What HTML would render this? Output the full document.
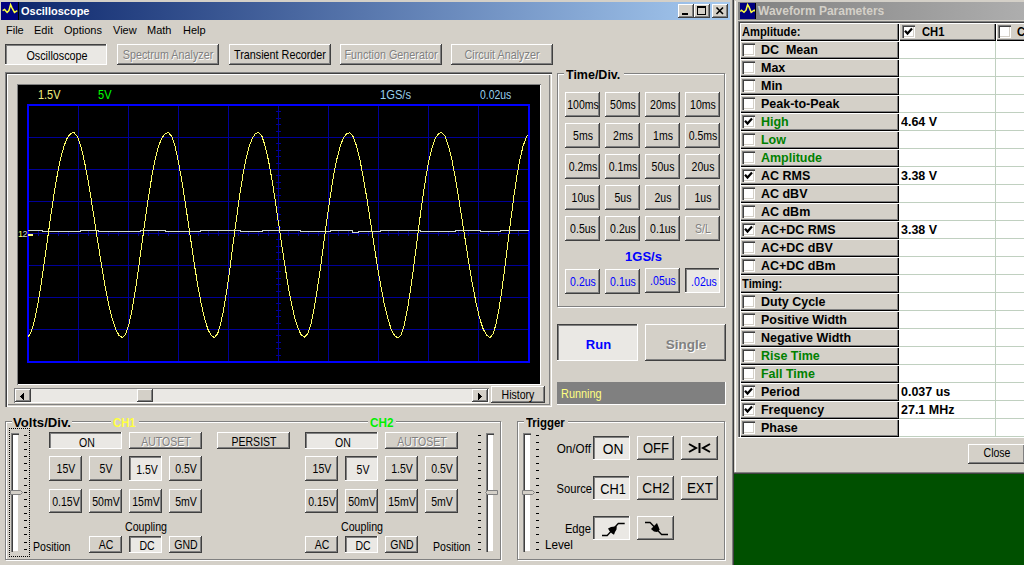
<!DOCTYPE html>
<html><head><meta charset="utf-8"><style>
html,body{margin:0;padding:0;}
body{width:1024px;height:565px;overflow:hidden;position:relative;background:#D4D0C8;font-family:"Liberation Sans",sans-serif;}
div{position:absolute;box-sizing:border-box;}
.t{white-space:nowrap;}
svg{position:absolute;}
</style></head><body>
<div style="left:734px;top:474px;width:290px;height:91px;background:#005000;"></div>
<div style="left:732px;top:0px;width:1px;height:565px;background:#808080;"></div>
<div style="left:733px;top:0px;width:1px;height:565px;background:#404040;"></div>
<div style="left:1px;top:2px;width:729px;height:18px;background:linear-gradient(to right,#0A246A,#A6CAF0);"></div>
<svg style="left:1px;top:2px" width="18" height="18" viewBox="0 0 18 18"><rect x="0" y="0" width="17" height="18" fill="#000080"/><path d="M1.6 8.6 L3.6 7.4 L6.1 10.4 L7.9 8.6 L9.6 2.6 L11 5.8 L13.5 10.4 L16.3 8.6" fill="none" stroke="#FFFF40" stroke-width="1.5"/><rect x="17" y="0" width="1" height="18" fill="#000"/></svg>
<div class="t" style="left:21px;top:4.19px;line-height:14px;font-size:11px;font-weight:bold;color:#fff;transform-origin:0 0;">Oscilloscope</div>
<div style="left:678px;top:4px;width:16px;height:14px;background:#D4D0C8;box-shadow:inset -1px -1px #404040,inset 1px 1px #fff,inset -2px -2px #808080;"></div>
<div style="left:694px;top:4px;width:16px;height:14px;background:#D4D0C8;box-shadow:inset -1px -1px #404040,inset 1px 1px #fff,inset -2px -2px #808080;"></div>
<div style="left:712px;top:4px;width:16px;height:14px;background:#D4D0C8;box-shadow:inset -1px -1px #404040,inset 1px 1px #fff,inset -2px -2px #808080;"></div>
<div style="left:682px;top:13px;width:6px;height:2px;background:#000;"></div>
<div style="left:697px;top:6px;width:9px;height:9px;box-sizing:border-box;border:1px solid #000;border-top-width:2px;"></div>
<svg style="left:712px;top:4px" width="16" height="14"><path d="M4.5 3.5 L11 10 M11 3.5 L4.5 10" stroke="#000" stroke-width="1.6"/></svg>
<div class="t" style="left:6px;top:23.19px;line-height:14px;font-size:11px;font-weight:normal;color:#000;transform-origin:0 0;">File</div>
<div class="t" style="left:34px;top:23.19px;line-height:14px;font-size:11px;font-weight:normal;color:#000;transform-origin:0 0;">Edit</div>
<div class="t" style="left:64px;top:23.19px;line-height:14px;font-size:11px;font-weight:normal;color:#000;transform-origin:0 0;">Options</div>
<div class="t" style="left:113px;top:23.19px;line-height:14px;font-size:11px;font-weight:normal;color:#000;transform-origin:0 0;">View</div>
<div class="t" style="left:147px;top:23.19px;line-height:14px;font-size:11px;font-weight:normal;color:#000;transform-origin:0 0;">Math</div>
<div class="t" style="left:183px;top:23.19px;line-height:14px;font-size:11px;font-weight:normal;color:#000;transform-origin:0 0;">Help</div>
<div style="left:5px;top:44px;width:102px;height:21px;background:#EAE8E4;box-shadow:inset -1px -1px #fff,inset 1px 1px #404040,inset 2px 2px #808080;"></div>
<div class="t" style="left:-143.0px;width:400px;text-align:center;top:47.00px;line-height:17px;font-size:13px;font-weight:normal;color:#000;transform-origin:50% 0;transform:scaleX(0.83);">Oscilloscope</div>
<div style="left:117px;top:44px;width:102px;height:21px;background:#D4D0C8;box-shadow:inset -1px -1px #404040,inset 1px 1px #fff,inset -2px -2px #808080;"></div>
<div class="t" style="left:-32.0px;width:400px;text-align:center;top:46.00px;line-height:17px;font-size:13px;font-weight:normal;color:#808080;transform-origin:50% 0;transform:scaleX(0.83);text-shadow:1px 1px #fff;">Spectrum Analyzer</div>
<div style="left:229px;top:44px;width:102px;height:21px;background:#D4D0C8;box-shadow:inset -1px -1px #404040,inset 1px 1px #fff,inset -2px -2px #808080;"></div>
<div class="t" style="left:80.0px;width:400px;text-align:center;top:46.00px;line-height:17px;font-size:13px;font-weight:normal;color:#000;transform-origin:50% 0;transform:scaleX(0.83);">Transient Recorder</div>
<div style="left:340px;top:44px;width:102px;height:21px;background:#D4D0C8;box-shadow:inset -1px -1px #404040,inset 1px 1px #fff,inset -2px -2px #808080;"></div>
<div class="t" style="left:191.0px;width:400px;text-align:center;top:46.00px;line-height:17px;font-size:13px;font-weight:normal;color:#808080;transform-origin:50% 0;transform:scaleX(0.83);text-shadow:1px 1px #fff;">Function Generator</div>
<div style="left:451px;top:44px;width:102px;height:21px;background:#D4D0C8;box-shadow:inset -1px -1px #404040,inset 1px 1px #fff,inset -2px -2px #808080;"></div>
<div class="t" style="left:302.0px;width:400px;text-align:center;top:46.00px;line-height:17px;font-size:13px;font-weight:normal;color:#808080;transform-origin:50% 0;transform:scaleX(0.83);text-shadow:1px 1px #fff;">Circuit Analyzer</div>
<div style="left:5px;top:72px;width:547px;height:335px;box-shadow:inset 1px 1px #808080,inset 2px 2px #404040,inset 3px 3px #fff,inset -1px -1px #fff,inset -2px -2px #D4D0C8,inset -3px -3px #808080;"></div>
<div style="left:17px;top:84px;width:524px;height:301px;background:#000;box-shadow:inset 1px 1px #808080,inset -1px -1px #fff;"></div>
<svg style="left:18px;top:85px" width="522" height="299" viewBox="18 85 522 299"><rect x="78" y="104" width="1" height="258" fill="#000098"/><rect x="128" y="104" width="1" height="258" fill="#000098"/><rect x="178" y="104" width="1" height="258" fill="#000098"/><rect x="228" y="104" width="1" height="258" fill="#000098"/><rect x="278" y="104" width="1" height="258" fill="#000098"/><rect x="328" y="104" width="1" height="258" fill="#000098"/><rect x="378" y="104" width="1" height="258" fill="#000098"/><rect x="428" y="104" width="1" height="258" fill="#000098"/><rect x="478" y="104" width="1" height="258" fill="#000098"/><rect x="27" y="137" width="502" height="1" fill="#000098"/><rect x="27" y="169" width="502" height="1" fill="#000098"/><rect x="27" y="201" width="502" height="1" fill="#000098"/><rect x="27" y="233" width="502" height="1" fill="#000098"/><rect x="27" y="265" width="502" height="1" fill="#000098"/><rect x="27" y="297" width="502" height="1" fill="#000098"/><rect x="27" y="329" width="502" height="1" fill="#000098"/><rect x="28" y="231" width="1" height="5" fill="#000098"/><rect x="38" y="231" width="1" height="5" fill="#000098"/><rect x="48" y="231" width="1" height="5" fill="#000098"/><rect x="58" y="231" width="1" height="5" fill="#000098"/><rect x="68" y="231" width="1" height="5" fill="#000098"/><rect x="78" y="231" width="1" height="5" fill="#000098"/><rect x="88" y="231" width="1" height="5" fill="#000098"/><rect x="98" y="231" width="1" height="5" fill="#000098"/><rect x="108" y="231" width="1" height="5" fill="#000098"/><rect x="118" y="231" width="1" height="5" fill="#000098"/><rect x="128" y="231" width="1" height="5" fill="#000098"/><rect x="138" y="231" width="1" height="5" fill="#000098"/><rect x="148" y="231" width="1" height="5" fill="#000098"/><rect x="158" y="231" width="1" height="5" fill="#000098"/><rect x="168" y="231" width="1" height="5" fill="#000098"/><rect x="178" y="231" width="1" height="5" fill="#000098"/><rect x="188" y="231" width="1" height="5" fill="#000098"/><rect x="198" y="231" width="1" height="5" fill="#000098"/><rect x="208" y="231" width="1" height="5" fill="#000098"/><rect x="218" y="231" width="1" height="5" fill="#000098"/><rect x="228" y="231" width="1" height="5" fill="#000098"/><rect x="238" y="231" width="1" height="5" fill="#000098"/><rect x="248" y="231" width="1" height="5" fill="#000098"/><rect x="258" y="231" width="1" height="5" fill="#000098"/><rect x="268" y="231" width="1" height="5" fill="#000098"/><rect x="278" y="231" width="1" height="5" fill="#000098"/><rect x="288" y="231" width="1" height="5" fill="#000098"/><rect x="298" y="231" width="1" height="5" fill="#000098"/><rect x="308" y="231" width="1" height="5" fill="#000098"/><rect x="318" y="231" width="1" height="5" fill="#000098"/><rect x="328" y="231" width="1" height="5" fill="#000098"/><rect x="338" y="231" width="1" height="5" fill="#000098"/><rect x="348" y="231" width="1" height="5" fill="#000098"/><rect x="358" y="231" width="1" height="5" fill="#000098"/><rect x="368" y="231" width="1" height="5" fill="#000098"/><rect x="378" y="231" width="1" height="5" fill="#000098"/><rect x="388" y="231" width="1" height="5" fill="#000098"/><rect x="398" y="231" width="1" height="5" fill="#000098"/><rect x="408" y="231" width="1" height="5" fill="#000098"/><rect x="418" y="231" width="1" height="5" fill="#000098"/><rect x="428" y="231" width="1" height="5" fill="#000098"/><rect x="438" y="231" width="1" height="5" fill="#000098"/><rect x="448" y="231" width="1" height="5" fill="#000098"/><rect x="458" y="231" width="1" height="5" fill="#000098"/><rect x="468" y="231" width="1" height="5" fill="#000098"/><rect x="478" y="231" width="1" height="5" fill="#000098"/><rect x="488" y="231" width="1" height="5" fill="#000098"/><rect x="498" y="231" width="1" height="5" fill="#000098"/><rect x="508" y="231" width="1" height="5" fill="#000098"/><rect x="518" y="231" width="1" height="5" fill="#000098"/><rect x="528" y="231" width="1" height="5" fill="#000098"/><rect x="276" y="105" width="5" height="1" fill="#000098"/><rect x="276" y="111" width="5" height="1" fill="#000098"/><rect x="276" y="118" width="5" height="1" fill="#000098"/><rect x="276" y="124" width="5" height="1" fill="#000098"/><rect x="276" y="131" width="5" height="1" fill="#000098"/><rect x="276" y="137" width="5" height="1" fill="#000098"/><rect x="276" y="143" width="5" height="1" fill="#000098"/><rect x="276" y="150" width="5" height="1" fill="#000098"/><rect x="276" y="156" width="5" height="1" fill="#000098"/><rect x="276" y="163" width="5" height="1" fill="#000098"/><rect x="276" y="169" width="5" height="1" fill="#000098"/><rect x="276" y="175" width="5" height="1" fill="#000098"/><rect x="276" y="182" width="5" height="1" fill="#000098"/><rect x="276" y="188" width="5" height="1" fill="#000098"/><rect x="276" y="195" width="5" height="1" fill="#000098"/><rect x="276" y="201" width="5" height="1" fill="#000098"/><rect x="276" y="207" width="5" height="1" fill="#000098"/><rect x="276" y="214" width="5" height="1" fill="#000098"/><rect x="276" y="220" width="5" height="1" fill="#000098"/><rect x="276" y="227" width="5" height="1" fill="#000098"/><rect x="276" y="233" width="5" height="1" fill="#000098"/><rect x="276" y="239" width="5" height="1" fill="#000098"/><rect x="276" y="246" width="5" height="1" fill="#000098"/><rect x="276" y="252" width="5" height="1" fill="#000098"/><rect x="276" y="259" width="5" height="1" fill="#000098"/><rect x="276" y="265" width="5" height="1" fill="#000098"/><rect x="276" y="271" width="5" height="1" fill="#000098"/><rect x="276" y="278" width="5" height="1" fill="#000098"/><rect x="276" y="284" width="5" height="1" fill="#000098"/><rect x="276" y="291" width="5" height="1" fill="#000098"/><rect x="276" y="297" width="5" height="1" fill="#000098"/><rect x="276" y="303" width="5" height="1" fill="#000098"/><rect x="276" y="310" width="5" height="1" fill="#000098"/><rect x="276" y="316" width="5" height="1" fill="#000098"/><rect x="276" y="323" width="5" height="1" fill="#000098"/><rect x="276" y="329" width="5" height="1" fill="#000098"/><rect x="276" y="335" width="5" height="1" fill="#000098"/><rect x="276" y="342" width="5" height="1" fill="#000098"/><rect x="276" y="348" width="5" height="1" fill="#000098"/><rect x="276" y="355" width="5" height="1" fill="#000098"/><rect x="276" y="361" width="5" height="1" fill="#000098"/><rect x="27" y="104" width="503" height="2" fill="#0000FF"/><rect x="27" y="361" width="503" height="2" fill="#0000FF"/><rect x="27" y="104" width="2" height="259" fill="#0000FF"/><rect x="528" y="104" width="2" height="259" fill="#0000FF"/><polyline points="28,230.5 42,230.5 42,231.5 80,231.5 80,230.5 98,230.5 98,231.5 120,231.5 120,231.5 140,231.5 140,230.5 165,230.5 165,231.5 200,231.5 200,230.5 240,230.5 240,231.5 262,231.5 262,230.5 300,230.5 300,231.5 330,231.5 330,230.5 352,230.5 352,232.5 358,232.5 358,231.5 380,231.5 380,230.5 420,230.5 420,231.5 455,231.5 455,230.5 480,230.5 480,231.5 500,231.5 500,230.5 529,230.5" fill="none" stroke="#D0D8D0" stroke-width="1" shape-rendering="crispEdges"/><polyline points="28.0,336.7 30.4,333.6 33.7,323.8 37.0,308.4 40.4,288.7 43.8,266.0 47.1,242.0 50.5,218.0 53.8,195.4 57.2,175.4 60.5,158.9 63.9,146.3 67.2,138.0 70.6,133.6 73.9,132.5 77.4,136.4 80.8,146.3 84.3,160.8 87.8,178.9 91.2,199.6 94.7,221.7 98.2,244.2 101.6,265.9 105.1,286.1 108.5,303.7 112.0,318.1 115.5,328.8 118.9,335.3 122.4,337.5 125.7,334.1 129.0,324.2 132.3,308.8 135.5,289.1 138.8,266.4 142.1,242.2 145.4,218.2 148.7,195.5 152.0,175.5 155.3,158.9 158.5,146.4 161.8,138.0 165.1,133.6 168.4,132.5 171.7,136.4 175.0,146.3 178.2,160.8 181.5,178.9 184.8,199.6 188.1,221.7 191.4,244.2 194.6,265.9 197.9,286.1 201.2,303.7 204.5,318.1 207.7,328.8 211.0,335.3 214.3,337.5 217.5,334.1 220.6,324.2 223.8,308.8 227.0,289.1 230.2,266.4 233.3,242.2 236.5,218.2 239.7,195.5 242.8,175.5 246.0,158.9 249.2,146.4 252.4,138.0 255.5,133.6 258.7,132.5 262.0,136.4 265.2,146.2 268.5,160.7 271.8,178.8 275.1,199.5 278.3,221.5 281.6,243.9 284.9,265.6 288.1,285.7 291.4,303.3 294.7,317.7 298.0,328.3 301.2,334.8 304.5,337.0 307.7,333.6 311.0,323.8 314.2,308.4 317.4,288.7 320.7,266.1 323.9,242.1 327.1,218.1 330.4,195.5 333.6,175.6 336.9,159.0 340.1,146.5 343.3,138.2 346.6,133.8 349.8,132.7 353.2,136.6 356.7,146.5 360.2,161.1 363.6,179.2 367.1,199.9 370.5,222.0 374.0,244.5 377.4,266.3 380.9,286.5 384.3,304.1 387.8,318.6 391.2,329.3 394.7,335.8 398.1,338.0 401.2,334.6 404.3,324.7 407.4,309.3 410.6,289.4 413.7,266.7 416.8,242.5 419.9,218.4 423.0,195.7 426.1,175.6 429.2,159.0 432.4,146.4 435.5,138.0 438.6,133.6 441.7,132.5 445.1,136.4 448.6,146.3 452.1,160.8 455.5,178.9 458.9,199.6 462.4,221.7 465.9,244.2 469.3,265.9 472.8,286.1 476.2,303.7 479.6,318.1 483.1,328.8 486.6,335.3 490.0,337.5 493.0,334.1 496.0,324.2 499.0,308.8 502.0,289.1 505.0,266.4 508.0,242.2 511.0,218.2 514.0,195.5 517.0,175.5 520.0,158.9 523.0,146.4 526.0,138.0 528.0,134.7" fill="none" stroke="#FFFF68" stroke-width="1" shape-rendering="crispEdges"/><rect x="28" y="234" width="5" height="2" fill="#FFFF80"/></svg>
<div class="t" style="left:18px;top:227.88px;line-height:12px;font-size:9px;font-weight:normal;color:#fff;transform-origin:0 0;letter-spacing:-0.5px;"><span style="color:#FFFF60">1</span><span style="color:#D0D8D0">2</span></div>
<div class="t" style="left:37.5px;top:86.00px;line-height:17px;font-size:13px;font-weight:normal;color:#F0F080;transform-origin:0 0;transform:scaleX(0.84);">1.5V</div>
<div class="t" style="left:97.5px;top:86.00px;line-height:17px;font-size:13px;font-weight:normal;color:#00FF00;transform-origin:0 0;transform:scaleX(0.85);">5V</div>
<div class="t" style="left:380px;top:86.00px;line-height:17px;font-size:13px;font-weight:normal;color:#9AD0EC;transform-origin:0 0;transform:scaleX(0.86);">1GS/s</div>
<div class="t" style="left:480px;top:86.00px;line-height:17px;font-size:13px;font-weight:normal;color:#9AD0EC;transform-origin:0 0;transform:scaleX(0.8);">0.02us</div>
<div style="left:14px;top:388px;width:475px;height:15px;background:#EAE8E4;box-shadow:inset 1px 1px #808080,inset -1px -1px #fff;"></div>
<div style="left:15px;top:389px;width:16px;height:13px;background:#D4D0C8;box-shadow:inset -1px -1px #404040,inset 1px 1px #fff,inset -2px -2px #808080;"></div>
<svg style="left:15px;top:389px" width="16" height="13" shape-rendering="crispEdges"><rect x="5" y="7" width="1" height="1"/><rect x="6" y="6" width="1" height="3"/><rect x="7" y="5" width="1" height="5"/><rect x="8" y="4" width="1" height="7"/></svg>
<div style="left:472px;top:389px;width:16px;height:13px;background:#D4D0C8;box-shadow:inset -1px -1px #404040,inset 1px 1px #fff,inset -2px -2px #808080;"></div>
<svg style="left:472px;top:389px" width="16" height="13" shape-rendering="crispEdges"><rect x="6" y="4" width="1" height="7"/><rect x="7" y="5" width="1" height="5"/><rect x="8" y="6" width="1" height="3"/><rect x="9" y="7" width="1" height="1"/></svg>
<div style="left:137px;top:389px;width:16px;height:13px;background:#D4D0C8;box-shadow:inset -1px -1px #404040,inset 1px 1px #fff,inset -2px -2px #808080;"></div>
<div style="left:491px;top:386px;width:54px;height:17px;background:#D4D0C8;box-shadow:inset -1px -1px #404040,inset 1px 1px #fff,inset -2px -2px #808080;"></div>
<div class="t" style="left:318.0px;width:400px;text-align:center;top:386.00px;line-height:17px;font-size:13px;font-weight:normal;color:#000;transform-origin:50% 0;transform:scaleX(0.81);">History</div>
<div style="left:558px;top:74px;width:168px;height:234px;box-sizing:border-box;border:1px solid #fff;"></div>
<div style="left:557px;top:73px;width:168px;height:234px;box-sizing:border-box;border:1px solid #808080;"></div>
<div style="left:564px;top:64px;width:60px;height:16px;background:#D4D0C8;"></div>
<div class="t" style="left:566px;top:66.00px;line-height:17px;font-size:13px;font-weight:bold;color:#000;transform-origin:0 0;transform:scaleX(0.96);">Time/Div.</div>
<div style="left:565px;top:92px;width:35px;height:25px;background:#D4D0C8;box-shadow:inset -1px -1px #404040,inset 1px 1px #fff,inset -2px -2px #808080;"></div>
<div class="t" style="left:382.5px;width:400px;text-align:center;top:96.00px;line-height:17px;font-size:13px;font-weight:normal;color:#000;transform-origin:50% 0;transform:scaleX(0.81);">100ms</div>
<div style="left:605px;top:92px;width:35px;height:25px;background:#D4D0C8;box-shadow:inset -1px -1px #404040,inset 1px 1px #fff,inset -2px -2px #808080;"></div>
<div class="t" style="left:422.5px;width:400px;text-align:center;top:96.00px;line-height:17px;font-size:13px;font-weight:normal;color:#000;transform-origin:50% 0;transform:scaleX(0.81);">50ms</div>
<div style="left:645px;top:92px;width:35px;height:25px;background:#D4D0C8;box-shadow:inset -1px -1px #404040,inset 1px 1px #fff,inset -2px -2px #808080;"></div>
<div class="t" style="left:462.5px;width:400px;text-align:center;top:96.00px;line-height:17px;font-size:13px;font-weight:normal;color:#000;transform-origin:50% 0;transform:scaleX(0.81);">20ms</div>
<div style="left:685px;top:92px;width:35px;height:25px;background:#D4D0C8;box-shadow:inset -1px -1px #404040,inset 1px 1px #fff,inset -2px -2px #808080;"></div>
<div class="t" style="left:502.5px;width:400px;text-align:center;top:96.00px;line-height:17px;font-size:13px;font-weight:normal;color:#000;transform-origin:50% 0;transform:scaleX(0.81);">10ms</div>
<div style="left:565px;top:123px;width:35px;height:25px;background:#D4D0C8;box-shadow:inset -1px -1px #404040,inset 1px 1px #fff,inset -2px -2px #808080;"></div>
<div class="t" style="left:382.5px;width:400px;text-align:center;top:127.00px;line-height:17px;font-size:13px;font-weight:normal;color:#000;transform-origin:50% 0;transform:scaleX(0.81);">5ms</div>
<div style="left:605px;top:123px;width:35px;height:25px;background:#D4D0C8;box-shadow:inset -1px -1px #404040,inset 1px 1px #fff,inset -2px -2px #808080;"></div>
<div class="t" style="left:422.5px;width:400px;text-align:center;top:127.00px;line-height:17px;font-size:13px;font-weight:normal;color:#000;transform-origin:50% 0;transform:scaleX(0.81);">2ms</div>
<div style="left:645px;top:123px;width:35px;height:25px;background:#D4D0C8;box-shadow:inset -1px -1px #404040,inset 1px 1px #fff,inset -2px -2px #808080;"></div>
<div class="t" style="left:462.5px;width:400px;text-align:center;top:127.00px;line-height:17px;font-size:13px;font-weight:normal;color:#000;transform-origin:50% 0;transform:scaleX(0.81);">1ms</div>
<div style="left:685px;top:123px;width:35px;height:25px;background:#D4D0C8;box-shadow:inset -1px -1px #404040,inset 1px 1px #fff,inset -2px -2px #808080;"></div>
<div class="t" style="left:502.5px;width:400px;text-align:center;top:127.00px;line-height:17px;font-size:13px;font-weight:normal;color:#000;transform-origin:50% 0;transform:scaleX(0.81);">0.5ms</div>
<div style="left:565px;top:154px;width:35px;height:25px;background:#D4D0C8;box-shadow:inset -1px -1px #404040,inset 1px 1px #fff,inset -2px -2px #808080;"></div>
<div class="t" style="left:382.5px;width:400px;text-align:center;top:158.00px;line-height:17px;font-size:13px;font-weight:normal;color:#000;transform-origin:50% 0;transform:scaleX(0.81);">0.2ms</div>
<div style="left:605px;top:154px;width:35px;height:25px;background:#D4D0C8;box-shadow:inset -1px -1px #404040,inset 1px 1px #fff,inset -2px -2px #808080;"></div>
<div class="t" style="left:422.5px;width:400px;text-align:center;top:158.00px;line-height:17px;font-size:13px;font-weight:normal;color:#000;transform-origin:50% 0;transform:scaleX(0.81);">0.1ms</div>
<div style="left:645px;top:154px;width:35px;height:25px;background:#D4D0C8;box-shadow:inset -1px -1px #404040,inset 1px 1px #fff,inset -2px -2px #808080;"></div>
<div class="t" style="left:462.5px;width:400px;text-align:center;top:158.00px;line-height:17px;font-size:13px;font-weight:normal;color:#000;transform-origin:50% 0;transform:scaleX(0.81);">50us</div>
<div style="left:685px;top:154px;width:35px;height:25px;background:#D4D0C8;box-shadow:inset -1px -1px #404040,inset 1px 1px #fff,inset -2px -2px #808080;"></div>
<div class="t" style="left:502.5px;width:400px;text-align:center;top:158.00px;line-height:17px;font-size:13px;font-weight:normal;color:#000;transform-origin:50% 0;transform:scaleX(0.81);">20us</div>
<div style="left:565px;top:185px;width:35px;height:25px;background:#D4D0C8;box-shadow:inset -1px -1px #404040,inset 1px 1px #fff,inset -2px -2px #808080;"></div>
<div class="t" style="left:382.5px;width:400px;text-align:center;top:189.00px;line-height:17px;font-size:13px;font-weight:normal;color:#000;transform-origin:50% 0;transform:scaleX(0.81);">10us</div>
<div style="left:605px;top:185px;width:35px;height:25px;background:#D4D0C8;box-shadow:inset -1px -1px #404040,inset 1px 1px #fff,inset -2px -2px #808080;"></div>
<div class="t" style="left:422.5px;width:400px;text-align:center;top:189.00px;line-height:17px;font-size:13px;font-weight:normal;color:#000;transform-origin:50% 0;transform:scaleX(0.81);">5us</div>
<div style="left:645px;top:185px;width:35px;height:25px;background:#D4D0C8;box-shadow:inset -1px -1px #404040,inset 1px 1px #fff,inset -2px -2px #808080;"></div>
<div class="t" style="left:462.5px;width:400px;text-align:center;top:189.00px;line-height:17px;font-size:13px;font-weight:normal;color:#000;transform-origin:50% 0;transform:scaleX(0.81);">2us</div>
<div style="left:685px;top:185px;width:35px;height:25px;background:#D4D0C8;box-shadow:inset -1px -1px #404040,inset 1px 1px #fff,inset -2px -2px #808080;"></div>
<div class="t" style="left:502.5px;width:400px;text-align:center;top:189.00px;line-height:17px;font-size:13px;font-weight:normal;color:#000;transform-origin:50% 0;transform:scaleX(0.81);">1us</div>
<div style="left:565px;top:216px;width:35px;height:25px;background:#D4D0C8;box-shadow:inset -1px -1px #404040,inset 1px 1px #fff,inset -2px -2px #808080;"></div>
<div class="t" style="left:382.5px;width:400px;text-align:center;top:220.00px;line-height:17px;font-size:13px;font-weight:normal;color:#000;transform-origin:50% 0;transform:scaleX(0.81);">0.5us</div>
<div style="left:605px;top:216px;width:35px;height:25px;background:#D4D0C8;box-shadow:inset -1px -1px #404040,inset 1px 1px #fff,inset -2px -2px #808080;"></div>
<div class="t" style="left:422.5px;width:400px;text-align:center;top:220.00px;line-height:17px;font-size:13px;font-weight:normal;color:#000;transform-origin:50% 0;transform:scaleX(0.81);">0.2us</div>
<div style="left:645px;top:216px;width:35px;height:25px;background:#D4D0C8;box-shadow:inset -1px -1px #404040,inset 1px 1px #fff,inset -2px -2px #808080;"></div>
<div class="t" style="left:462.5px;width:400px;text-align:center;top:220.00px;line-height:17px;font-size:13px;font-weight:normal;color:#000;transform-origin:50% 0;transform:scaleX(0.81);">0.1us</div>
<div style="left:685px;top:216px;width:35px;height:25px;background:#D4D0C8;box-shadow:inset -1px -1px #404040,inset 1px 1px #fff,inset -2px -2px #808080;"></div>
<div class="t" style="left:502.5px;width:400px;text-align:center;top:220.00px;line-height:17px;font-size:13px;font-weight:normal;color:#808080;transform-origin:50% 0;transform:scaleX(0.81);text-shadow:1px 1px #fff;">S/L</div>
<div class="t" style="left:443.5px;width:400px;text-align:center;top:248.00px;line-height:17px;font-size:13px;font-weight:bold;color:#0000FF;transform-origin:50% 0;">1GS/s</div>
<div style="left:565px;top:269px;width:35px;height:25px;background:#D4D0C8;box-shadow:inset -1px -1px #404040,inset 1px 1px #fff,inset -2px -2px #808080;"></div>
<div class="t" style="left:382.5px;width:400px;text-align:center;top:273.00px;line-height:17px;font-size:13px;font-weight:normal;color:#0000FF;transform-origin:50% 0;transform:scaleX(0.81);">0.2us</div>
<div style="left:605px;top:269px;width:35px;height:25px;background:#D4D0C8;box-shadow:inset -1px -1px #404040,inset 1px 1px #fff,inset -2px -2px #808080;"></div>
<div class="t" style="left:422.5px;width:400px;text-align:center;top:273.00px;line-height:17px;font-size:13px;font-weight:normal;color:#0000FF;transform-origin:50% 0;transform:scaleX(0.81);">0.1us</div>
<div style="left:645px;top:268px;width:35px;height:25px;background:#D4D0C8;box-shadow:inset -1px -1px #404040,inset 1px 1px #fff,inset -2px -2px #808080;"></div>
<div class="t" style="left:462.5px;width:400px;text-align:center;top:272.00px;line-height:17px;font-size:13px;font-weight:normal;color:#0000FF;transform-origin:50% 0;transform:scaleX(0.81);">.05us</div>
<div style="left:685px;top:268px;width:35px;height:25px;background:#EAE8E4;box-shadow:inset -1px -1px #fff,inset 1px 1px #404040,inset 2px 2px #808080;"></div>
<div class="t" style="left:503.5px;width:400px;text-align:center;top:273.00px;line-height:17px;font-size:13px;font-weight:normal;color:#0000FF;transform-origin:50% 0;transform:scaleX(0.81);">.02us</div>
<div style="left:557px;top:324px;width:81px;height:37px;background:#EAE8E4;box-shadow:inset -1px -1px #fff,inset 1px 1px #404040,inset 2px 2px #808080;"></div>
<div class="t" style="left:398.5px;width:400px;text-align:center;top:336.00px;line-height:17px;font-size:13px;font-weight:bold;color:#0000FF;transform-origin:50% 0;">Run</div>
<div style="left:645px;top:324px;width:81px;height:37px;background:#D4D0C8;box-shadow:inset -1px -1px #404040,inset 1px 1px #fff,inset -2px -2px #808080;"></div>
<div class="t" style="left:485.5px;width:400px;text-align:center;top:336.00px;line-height:17px;font-size:13px;font-weight:bold;color:#808080;transform-origin:50% 0;transform:scaleX(1.04);text-shadow:1px 1px #fff;">Single</div>
<div style="left:557px;top:382px;width:169px;height:23px;background:#808080;box-shadow:inset -1px -1px #fff;"></div>
<div class="t" style="left:560.5px;top:385.00px;line-height:17px;font-size:13px;font-weight:normal;color:#FFFF80;transform-origin:0 0;transform:scaleX(0.84);">Running</div>
<div style="left:6px;top:422px;width:496px;height:139px;box-sizing:border-box;border:1px solid #fff;"></div>
<div style="left:5px;top:421px;width:496px;height:139px;box-sizing:border-box;border:1px solid #808080;"></div>
<div style="left:12px;top:412px;width:60px;height:16px;background:#D4D0C8;"></div>
<div class="t" style="left:13px;top:414.00px;line-height:17px;font-size:13px;font-weight:bold;color:#000;transform-origin:0 0;transform:scaleX(1.01);">Volts/Div.</div>
<div style="left:111px;top:412px;width:28px;height:16px;background:#D4D0C8;"></div>
<div class="t" style="left:113px;top:414.00px;line-height:17px;font-size:13px;font-weight:bold;color:#FFFF40;transform-origin:0 0;transform:scaleX(0.87);">CH1</div>
<div style="left:368px;top:412px;width:28px;height:16px;background:#D4D0C8;"></div>
<div class="t" style="left:370px;top:414.00px;line-height:17px;font-size:13px;font-weight:bold;color:#00F000;transform-origin:0 0;transform:scaleX(0.9);">CH2</div>
<div style="left:11px;top:433px;width:8px;height:119px;background:#fff;box-shadow:inset 1px 1px #808080,inset 2px 2px #404040,inset -1px -1px #D4D0C8;"></div>
<svg style="left:10px;top:490px" width="14" height="6"><path d="M0.5 0.5 H10.5 L12.5 2.5 L10.5 4.5 H0.5 Z" fill="#D4D0C8" stroke="#808080"/></svg>
<div style="left:24px;top:435px;width:3px;height:1px;background:#000;"></div>
<div style="left:24px;top:442px;width:3px;height:1px;background:#000;"></div>
<div style="left:24px;top:449px;width:3px;height:1px;background:#000;"></div>
<div style="left:24px;top:456px;width:3px;height:1px;background:#000;"></div>
<div style="left:24px;top:463px;width:3px;height:1px;background:#000;"></div>
<div style="left:24px;top:470px;width:3px;height:1px;background:#000;"></div>
<div style="left:24px;top:478px;width:3px;height:1px;background:#000;"></div>
<div style="left:24px;top:485px;width:3px;height:1px;background:#000;"></div>
<div style="left:24px;top:492px;width:3px;height:1px;background:#000;"></div>
<div style="left:24px;top:499px;width:3px;height:1px;background:#000;"></div>
<div style="left:24px;top:506px;width:3px;height:1px;background:#000;"></div>
<div style="left:24px;top:513px;width:3px;height:1px;background:#000;"></div>
<div style="left:24px;top:520px;width:3px;height:1px;background:#000;"></div>
<div style="left:24px;top:527px;width:3px;height:1px;background:#000;"></div>
<div style="left:24px;top:534px;width:3px;height:1px;background:#000;"></div>
<div style="left:24px;top:542px;width:3px;height:1px;background:#000;"></div>
<div style="left:24px;top:549px;width:3px;height:1px;background:#000;"></div>
<div style="left:9px;top:428px;width:21px;height:129px;border:1px dotted #000;"></div>
<div style="left:486px;top:433px;width:8px;height:119px;background:#fff;box-shadow:inset 1px 1px #808080,inset 2px 2px #404040,inset -1px -1px #D4D0C8;"></div>
<svg style="left:485px;top:490px" width="14" height="6"><path d="M12.5 0.5 H2.5 L0.5 2.5 L2.5 4.5 H12.5 Z" fill="#D4D0C8" stroke="#808080"/></svg>
<div style="left:478px;top:435px;width:3px;height:1px;background:#000;"></div>
<div style="left:478px;top:442px;width:3px;height:1px;background:#000;"></div>
<div style="left:478px;top:449px;width:3px;height:1px;background:#000;"></div>
<div style="left:478px;top:456px;width:3px;height:1px;background:#000;"></div>
<div style="left:478px;top:463px;width:3px;height:1px;background:#000;"></div>
<div style="left:478px;top:470px;width:3px;height:1px;background:#000;"></div>
<div style="left:478px;top:478px;width:3px;height:1px;background:#000;"></div>
<div style="left:478px;top:485px;width:3px;height:1px;background:#000;"></div>
<div style="left:478px;top:492px;width:3px;height:1px;background:#000;"></div>
<div style="left:478px;top:499px;width:3px;height:1px;background:#000;"></div>
<div style="left:478px;top:506px;width:3px;height:1px;background:#000;"></div>
<div style="left:478px;top:513px;width:3px;height:1px;background:#000;"></div>
<div style="left:478px;top:520px;width:3px;height:1px;background:#000;"></div>
<div style="left:478px;top:527px;width:3px;height:1px;background:#000;"></div>
<div style="left:478px;top:534px;width:3px;height:1px;background:#000;"></div>
<div style="left:478px;top:542px;width:3px;height:1px;background:#000;"></div>
<div style="left:478px;top:549px;width:3px;height:1px;background:#000;"></div>
<div class="t" style="left:32.5px;top:538.00px;line-height:17px;font-size:13px;font-weight:normal;color:#000;transform-origin:0 0;transform:scaleX(0.81);">Position</div>
<div class="t" style="left:432.5px;top:538.00px;line-height:17px;font-size:13px;font-weight:normal;color:#000;transform-origin:0 0;transform:scaleX(0.81);">Position</div>
<div style="left:49px;top:432px;width:73px;height:17px;background:#EAE8E4;box-shadow:inset -1px -1px #fff,inset 1px 1px #404040,inset 2px 2px #808080;"></div>
<div class="t" style="left:-113.5px;width:400px;text-align:center;top:434.00px;line-height:17px;font-size:13px;font-weight:normal;color:#000;transform-origin:50% 0;transform:scaleX(0.81);">ON</div>
<div style="left:129px;top:432px;width:73px;height:17px;background:#D4D0C8;box-shadow:inset -1px -1px #404040,inset 1px 1px #fff,inset -2px -2px #808080;"></div>
<div class="t" style="left:-34.5px;width:400px;text-align:center;top:433.00px;line-height:17px;font-size:13px;font-weight:normal;color:#808080;transform-origin:50% 0;transform:scaleX(0.81);text-shadow:1px 1px #fff;">AUTOSET</div>
<div style="left:49px;top:456px;width:33px;height:25px;background:#D4D0C8;box-shadow:inset -1px -1px #404040,inset 1px 1px #fff,inset -2px -2px #808080;"></div>
<div class="t" style="left:-134.5px;width:400px;text-align:center;top:460.00px;line-height:17px;font-size:13px;font-weight:normal;color:#000;transform-origin:50% 0;transform:scaleX(0.81);">15V</div>
<div style="left:49px;top:489px;width:33px;height:24px;background:#D4D0C8;box-shadow:inset -1px -1px #404040,inset 1px 1px #fff,inset -2px -2px #808080;"></div>
<div class="t" style="left:-134.5px;width:400px;text-align:center;top:493.00px;line-height:17px;font-size:13px;font-weight:normal;color:#000;transform-origin:50% 0;transform:scaleX(0.81);">0.15V</div>
<div style="left:89px;top:456px;width:33px;height:25px;background:#D4D0C8;box-shadow:inset -1px -1px #404040,inset 1px 1px #fff,inset -2px -2px #808080;"></div>
<div class="t" style="left:-94.5px;width:400px;text-align:center;top:460.00px;line-height:17px;font-size:13px;font-weight:normal;color:#000;transform-origin:50% 0;transform:scaleX(0.81);">5V</div>
<div style="left:89px;top:489px;width:33px;height:24px;background:#D4D0C8;box-shadow:inset -1px -1px #404040,inset 1px 1px #fff,inset -2px -2px #808080;"></div>
<div class="t" style="left:-94.5px;width:400px;text-align:center;top:493.00px;line-height:17px;font-size:13px;font-weight:normal;color:#000;transform-origin:50% 0;transform:scaleX(0.81);">50mV</div>
<div style="left:129px;top:456px;width:33px;height:25px;background:#EAE8E4;box-shadow:inset -1px -1px #fff,inset 1px 1px #404040,inset 2px 2px #808080;"></div>
<div class="t" style="left:-53.5px;width:400px;text-align:center;top:461.00px;line-height:17px;font-size:13px;font-weight:normal;color:#000;transform-origin:50% 0;transform:scaleX(0.81);">1.5V</div>
<div style="left:129px;top:489px;width:33px;height:24px;background:#D4D0C8;box-shadow:inset -1px -1px #404040,inset 1px 1px #fff,inset -2px -2px #808080;"></div>
<div class="t" style="left:-54.5px;width:400px;text-align:center;top:493.00px;line-height:17px;font-size:13px;font-weight:normal;color:#000;transform-origin:50% 0;transform:scaleX(0.81);">15mV</div>
<div style="left:169px;top:456px;width:33px;height:25px;background:#D4D0C8;box-shadow:inset -1px -1px #404040,inset 1px 1px #fff,inset -2px -2px #808080;"></div>
<div class="t" style="left:-14.5px;width:400px;text-align:center;top:460.00px;line-height:17px;font-size:13px;font-weight:normal;color:#000;transform-origin:50% 0;transform:scaleX(0.81);">0.5V</div>
<div style="left:169px;top:489px;width:33px;height:24px;background:#D4D0C8;box-shadow:inset -1px -1px #404040,inset 1px 1px #fff,inset -2px -2px #808080;"></div>
<div class="t" style="left:-14.5px;width:400px;text-align:center;top:493.00px;line-height:17px;font-size:13px;font-weight:normal;color:#000;transform-origin:50% 0;transform:scaleX(0.81);">5mV</div>
<div class="t" style="left:-54px;width:400px;text-align:center;top:518.00px;line-height:17px;font-size:13px;font-weight:normal;color:#000;transform-origin:50% 0;transform:scaleX(0.82);">Coupling</div>
<div style="left:89px;top:536px;width:33px;height:17px;background:#D4D0C8;box-shadow:inset -1px -1px #404040,inset 1px 1px #fff,inset -2px -2px #808080;"></div>
<div class="t" style="left:-94.5px;width:400px;text-align:center;top:536.00px;line-height:17px;font-size:13px;font-weight:normal;color:#000;transform-origin:50% 0;transform:scaleX(0.81);">AC</div>
<div style="left:129px;top:536px;width:33px;height:17px;background:#EAE8E4;box-shadow:inset -1px -1px #fff,inset 1px 1px #404040,inset 2px 2px #808080;"></div>
<div class="t" style="left:-53.5px;width:400px;text-align:center;top:537.00px;line-height:17px;font-size:13px;font-weight:normal;color:#000;transform-origin:50% 0;transform:scaleX(0.81);">DC</div>
<div style="left:169px;top:536px;width:33px;height:17px;background:#D4D0C8;box-shadow:inset -1px -1px #404040,inset 1px 1px #fff,inset -2px -2px #808080;"></div>
<div class="t" style="left:-14.5px;width:400px;text-align:center;top:536.00px;line-height:17px;font-size:13px;font-weight:normal;color:#000;transform-origin:50% 0;transform:scaleX(0.81);">GND</div>
<div style="left:305px;top:432px;width:73px;height:17px;background:#EAE8E4;box-shadow:inset -1px -1px #fff,inset 1px 1px #404040,inset 2px 2px #808080;"></div>
<div class="t" style="left:142.5px;width:400px;text-align:center;top:434.00px;line-height:17px;font-size:13px;font-weight:normal;color:#000;transform-origin:50% 0;transform:scaleX(0.81);">ON</div>
<div style="left:385px;top:432px;width:73px;height:17px;background:#D4D0C8;box-shadow:inset -1px -1px #404040,inset 1px 1px #fff,inset -2px -2px #808080;"></div>
<div class="t" style="left:221.5px;width:400px;text-align:center;top:433.00px;line-height:17px;font-size:13px;font-weight:normal;color:#808080;transform-origin:50% 0;transform:scaleX(0.81);text-shadow:1px 1px #fff;">AUTOSET</div>
<div style="left:305px;top:456px;width:33px;height:25px;background:#D4D0C8;box-shadow:inset -1px -1px #404040,inset 1px 1px #fff,inset -2px -2px #808080;"></div>
<div class="t" style="left:121.5px;width:400px;text-align:center;top:460.00px;line-height:17px;font-size:13px;font-weight:normal;color:#000;transform-origin:50% 0;transform:scaleX(0.81);">15V</div>
<div style="left:305px;top:489px;width:33px;height:24px;background:#D4D0C8;box-shadow:inset -1px -1px #404040,inset 1px 1px #fff,inset -2px -2px #808080;"></div>
<div class="t" style="left:121.5px;width:400px;text-align:center;top:493.00px;line-height:17px;font-size:13px;font-weight:normal;color:#000;transform-origin:50% 0;transform:scaleX(0.81);">0.15V</div>
<div style="left:345px;top:456px;width:33px;height:25px;background:#EAE8E4;box-shadow:inset -1px -1px #fff,inset 1px 1px #404040,inset 2px 2px #808080;"></div>
<div class="t" style="left:162.5px;width:400px;text-align:center;top:461.00px;line-height:17px;font-size:13px;font-weight:normal;color:#000;transform-origin:50% 0;transform:scaleX(0.81);">5V</div>
<div style="left:345px;top:489px;width:33px;height:24px;background:#D4D0C8;box-shadow:inset -1px -1px #404040,inset 1px 1px #fff,inset -2px -2px #808080;"></div>
<div class="t" style="left:161.5px;width:400px;text-align:center;top:493.00px;line-height:17px;font-size:13px;font-weight:normal;color:#000;transform-origin:50% 0;transform:scaleX(0.81);">50mV</div>
<div style="left:385px;top:456px;width:33px;height:25px;background:#D4D0C8;box-shadow:inset -1px -1px #404040,inset 1px 1px #fff,inset -2px -2px #808080;"></div>
<div class="t" style="left:201.5px;width:400px;text-align:center;top:460.00px;line-height:17px;font-size:13px;font-weight:normal;color:#000;transform-origin:50% 0;transform:scaleX(0.81);">1.5V</div>
<div style="left:385px;top:489px;width:33px;height:24px;background:#D4D0C8;box-shadow:inset -1px -1px #404040,inset 1px 1px #fff,inset -2px -2px #808080;"></div>
<div class="t" style="left:201.5px;width:400px;text-align:center;top:493.00px;line-height:17px;font-size:13px;font-weight:normal;color:#000;transform-origin:50% 0;transform:scaleX(0.81);">15mV</div>
<div style="left:425px;top:456px;width:33px;height:25px;background:#D4D0C8;box-shadow:inset -1px -1px #404040,inset 1px 1px #fff,inset -2px -2px #808080;"></div>
<div class="t" style="left:241.5px;width:400px;text-align:center;top:460.00px;line-height:17px;font-size:13px;font-weight:normal;color:#000;transform-origin:50% 0;transform:scaleX(0.81);">0.5V</div>
<div style="left:425px;top:489px;width:33px;height:24px;background:#D4D0C8;box-shadow:inset -1px -1px #404040,inset 1px 1px #fff,inset -2px -2px #808080;"></div>
<div class="t" style="left:241.5px;width:400px;text-align:center;top:493.00px;line-height:17px;font-size:13px;font-weight:normal;color:#000;transform-origin:50% 0;transform:scaleX(0.81);">5mV</div>
<div class="t" style="left:162px;width:400px;text-align:center;top:518.00px;line-height:17px;font-size:13px;font-weight:normal;color:#000;transform-origin:50% 0;transform:scaleX(0.82);">Coupling</div>
<div style="left:305px;top:536px;width:33px;height:17px;background:#D4D0C8;box-shadow:inset -1px -1px #404040,inset 1px 1px #fff,inset -2px -2px #808080;"></div>
<div class="t" style="left:121.5px;width:400px;text-align:center;top:536.00px;line-height:17px;font-size:13px;font-weight:normal;color:#000;transform-origin:50% 0;transform:scaleX(0.81);">AC</div>
<div style="left:345px;top:536px;width:33px;height:17px;background:#EAE8E4;box-shadow:inset -1px -1px #fff,inset 1px 1px #404040,inset 2px 2px #808080;"></div>
<div class="t" style="left:162.5px;width:400px;text-align:center;top:537.00px;line-height:17px;font-size:13px;font-weight:normal;color:#000;transform-origin:50% 0;transform:scaleX(0.81);">DC</div>
<div style="left:385px;top:536px;width:33px;height:17px;background:#D4D0C8;box-shadow:inset -1px -1px #404040,inset 1px 1px #fff,inset -2px -2px #808080;"></div>
<div class="t" style="left:201.5px;width:400px;text-align:center;top:536.00px;line-height:17px;font-size:13px;font-weight:normal;color:#000;transform-origin:50% 0;transform:scaleX(0.81);">GND</div>
<div style="left:217px;top:432px;width:73px;height:17px;background:#D4D0C8;box-shadow:inset -1px -1px #404040,inset 1px 1px #fff,inset -2px -2px #808080;"></div>
<div class="t" style="left:53.5px;width:400px;text-align:center;top:433.00px;line-height:17px;font-size:13px;font-weight:normal;color:#000;transform-origin:50% 0;transform:scaleX(0.81);">PERSIST</div>
<div style="left:518px;top:422px;width:208px;height:139px;box-sizing:border-box;border:1px solid #fff;"></div>
<div style="left:517px;top:421px;width:208px;height:139px;box-sizing:border-box;border:1px solid #808080;"></div>
<div style="left:524px;top:412px;width:44px;height:16px;background:#D4D0C8;"></div>
<div class="t" style="left:526px;top:414.00px;line-height:17px;font-size:13px;font-weight:bold;color:#000;transform-origin:0 0;transform:scaleX(0.88);">Trigger</div>
<div style="left:523px;top:433px;width:8px;height:119px;background:#fff;box-shadow:inset 1px 1px #808080,inset 2px 2px #404040,inset -1px -1px #D4D0C8;"></div>
<svg style="left:522px;top:490px" width="14" height="6"><path d="M0.5 0.5 H10.5 L12.5 2.5 L10.5 4.5 H0.5 Z" fill="#D4D0C8" stroke="#808080"/></svg>
<div style="left:536px;top:435px;width:3px;height:1px;background:#000;"></div>
<div style="left:536px;top:442px;width:3px;height:1px;background:#000;"></div>
<div style="left:536px;top:449px;width:3px;height:1px;background:#000;"></div>
<div style="left:536px;top:456px;width:3px;height:1px;background:#000;"></div>
<div style="left:536px;top:463px;width:3px;height:1px;background:#000;"></div>
<div style="left:536px;top:470px;width:3px;height:1px;background:#000;"></div>
<div style="left:536px;top:478px;width:3px;height:1px;background:#000;"></div>
<div style="left:536px;top:485px;width:3px;height:1px;background:#000;"></div>
<div style="left:536px;top:492px;width:3px;height:1px;background:#000;"></div>
<div style="left:536px;top:499px;width:3px;height:1px;background:#000;"></div>
<div style="left:536px;top:506px;width:3px;height:1px;background:#000;"></div>
<div style="left:536px;top:513px;width:3px;height:1px;background:#000;"></div>
<div style="left:536px;top:520px;width:3px;height:1px;background:#000;"></div>
<div style="left:536px;top:527px;width:3px;height:1px;background:#000;"></div>
<div style="left:536px;top:534px;width:3px;height:1px;background:#000;"></div>
<div style="left:536px;top:542px;width:3px;height:1px;background:#000;"></div>
<div style="left:536px;top:549px;width:3px;height:1px;background:#000;"></div>
<div class="t" style="left:191px;width:400px;text-align:right;top:440.00px;line-height:17px;font-size:13px;font-weight:normal;color:#000;transform-origin:100% 0;transform:scaleX(0.9);">On/Off</div>
<div class="t" style="left:192px;width:400px;text-align:right;top:480.00px;line-height:17px;font-size:13px;font-weight:normal;color:#000;transform-origin:100% 0;transform:scaleX(0.86);">Source</div>
<div class="t" style="left:191px;width:400px;text-align:right;top:520.00px;line-height:17px;font-size:13px;font-weight:normal;color:#000;transform-origin:100% 0;transform:scaleX(0.86);">Edge</div>
<div class="t" style="left:544.5px;top:536.00px;line-height:17px;font-size:13px;font-weight:normal;color:#000;transform-origin:0 0;transform:scaleX(0.9);">Level</div>
<div style="left:593px;top:436px;width:37px;height:24px;background:#EAE8E4;box-shadow:inset -1px -1px #fff,inset 1px 1px #404040,inset 2px 2px #808080;"></div>
<div class="t" style="left:412.5px;width:400px;text-align:center;top:440.48px;line-height:19px;font-size:14.5px;font-weight:normal;color:#000;transform-origin:50% 0;transform:scaleX(0.95);">ON</div>
<div style="left:637px;top:436px;width:37px;height:24px;background:#D4D0C8;box-shadow:inset -1px -1px #404040,inset 1px 1px #fff,inset -2px -2px #808080;"></div>
<div class="t" style="left:455.5px;width:400px;text-align:center;top:439.48px;line-height:19px;font-size:14.5px;font-weight:normal;color:#000;transform-origin:50% 0;transform:scaleX(0.9);">OFF</div>
<div style="left:681px;top:436px;width:37px;height:24px;background:#D4D0C8;box-shadow:inset -1px -1px #404040,inset 1px 1px #fff,inset -2px -2px #808080;"></div>
<svg style="left:681px;top:436px" width="37" height="24"><path d="M8 8 L15 12 L8 16" fill="none" stroke="#000" stroke-width="2"/><rect x="17.5" y="7" width="2" height="10" fill="#000"/><path d="M29 8 L22 12 L29 16" fill="none" stroke="#000" stroke-width="2"/></svg>
<div style="left:593px;top:476px;width:37px;height:24px;background:#EAE8E4;box-shadow:inset -1px -1px #fff,inset 1px 1px #404040,inset 2px 2px #808080;"></div>
<div class="t" style="left:412.5px;width:400px;text-align:center;top:480.48px;line-height:19px;font-size:14.5px;font-weight:normal;color:#000;transform-origin:50% 0;transform:scaleX(0.88);">CH1</div>
<div style="left:637px;top:476px;width:37px;height:24px;background:#D4D0C8;box-shadow:inset -1px -1px #404040,inset 1px 1px #fff,inset -2px -2px #808080;"></div>
<div class="t" style="left:455.5px;width:400px;text-align:center;top:479.48px;line-height:19px;font-size:14.5px;font-weight:normal;color:#000;transform-origin:50% 0;transform:scaleX(0.94);">CH2</div>
<div style="left:681px;top:476px;width:37px;height:24px;background:#D4D0C8;box-shadow:inset -1px -1px #404040,inset 1px 1px #fff,inset -2px -2px #808080;"></div>
<div class="t" style="left:499.5px;width:400px;text-align:center;top:479.48px;line-height:19px;font-size:14.5px;font-weight:normal;color:#000;transform-origin:50% 0;transform:scaleX(0.93);">EXT</div>
<div style="left:593px;top:516px;width:37px;height:24px;background:#EAE8E4;box-shadow:inset -1px -1px #fff,inset 1px 1px #404040,inset 2px 2px #808080;"></div>
<div style="left:637px;top:516px;width:37px;height:24px;background:#D4D0C8;box-shadow:inset -1px -1px #404040,inset 1px 1px #fff,inset -2px -2px #808080;"></div>
<svg style="left:593px;top:516px" width="37" height="24"><path d="M9 19.5 H14.2 L25.3 7.5 H31.7" fill="none" stroke="#000" stroke-width="1.3"/><path d="M15 12.6 L18 11 L23.8 10.3 L23.5 13.5 L22 16 L21 18.8 L19 17.5 L16.5 15 Z" fill="#000"/></svg>
<svg style="left:637px;top:516px" width="37" height="24"><path d="M8 6.5 H13.1 L24.6 18.5 H31" fill="none" stroke="#000" stroke-width="1.3"/><path d="M14 13 L16.5 10.5 L20 7 L21 9.5 L22.7 13.8 L20 16 L17 15.5 Z" fill="#000"/></svg>
<div style="left:734px;top:0px;width:290px;height:474px;background:#D4D0C8;"></div>
<div style="left:735px;top:1px;width:1px;height:473px;background:#fff;"></div>
<div style="left:734px;top:472px;width:290px;height:1px;background:#808080;"></div>
<div style="left:734px;top:473px;width:290px;height:1px;background:#404040;"></div>
<div style="left:738px;top:2px;width:286px;height:18px;background:linear-gradient(to right,#808080,#C0C0C0 140%);"></div>
<svg style="left:740px;top:3px" width="16" height="16" viewBox="0 0 16 16"><rect x="0" y="0" width="16" height="16" fill="#000080"/><path d="M0.3 8.5 L1.5 7.2 L4 9.3 L6 7.2 L7.6 1.7 L9.1 4.2 L11.2 9.3 L14.2 7.2 L15.3 8.3" fill="none" stroke="#FFFF40" stroke-width="1.5"/><rect x="15" y="0" width="1" height="16" fill="#000"/></svg>
<div class="t" style="left:758px;top:2.84px;line-height:16px;font-size:12px;font-weight:bold;color:#D4D0C8;transform-origin:0 0;">Waveform Parameters</div>
<div style="left:738px;top:21px;width:286px;height:416px;background:#fff;box-shadow:inset 1px 1px #808080,inset 2px 2px #404040;"></div>
<div style="left:740px;top:23px;width:159px;height:18px;background:#D4D0C8;box-shadow:inset 1px 1px #fff,inset -1px -1px #000,inset -2px -2px #808080;"></div>
<div class="t" style="left:742px;top:23.00px;line-height:17px;font-size:13px;font-weight:bold;color:#000;transform-origin:0 0;transform:scaleX(0.86);">Amplitude:</div>
<div style="left:899px;top:23px;width:97px;height:18px;background:#D4D0C8;box-shadow:inset 1px 1px #fff,inset -1px -1px #000,inset -2px -2px #808080;"></div>
<div style="left:902px;top:25px;width:13px;height:13px;background:#fff;box-shadow:inset 1px 1px #808080,inset 2px 2px #404040,inset -1px -1px #fff,inset -2px -2px #D4D0C8;"></div>
<svg style="left:902px;top:25px" width="13" height="13"><path d="M3 5.8 L5.5 8.6 L10 3.6" fill="none" stroke="#000" stroke-width="2.2"/></svg>
<div class="t" style="left:921.5px;top:23.00px;line-height:17px;font-size:13px;font-weight:bold;color:#000;transform-origin:0 0;transform:scaleX(0.86);">CH1</div>
<div style="left:996px;top:23px;width:40px;height:18px;background:#D4D0C8;box-shadow:inset 1px 1px #fff,inset -1px -1px #000,inset -2px -2px #808080;"></div>
<div style="left:998px;top:25px;width:13px;height:13px;background:#fff;box-shadow:inset 1px 1px #808080,inset 2px 2px #404040,inset -1px -1px #fff,inset -2px -2px #D4D0C8;"></div>
<div class="t" style="left:1017px;top:23.00px;line-height:17px;font-size:13px;font-weight:bold;color:#000;transform-origin:0 0;transform:scaleX(0.86);">CH2</div>
<div style="left:740px;top:41px;width:159px;height:18px;background:#D4D0C8;box-shadow:inset 1px 1px #fff,inset -1px -1px #000,inset -2px -2px #808080;"></div>
<div style="left:742px;top:43px;width:13px;height:13px;background:#fff;box-shadow:inset 1px 1px #808080,inset 2px 2px #404040,inset -1px -1px #fff,inset -2px -2px #D4D0C8;"></div>
<div class="t" style="left:761px;top:41.00px;line-height:17px;font-size:13px;font-weight:bold;color:#000;transform-origin:0 0;transform:scaleX(0.96);">DC&nbsp;&nbsp;Mean</div>
<div style="left:899px;top:58px;width:125px;height:1px;background:#C0D0C0;"></div>
<div style="left:740px;top:59px;width:159px;height:18px;background:#D4D0C8;box-shadow:inset 1px 1px #fff,inset -1px -1px #000,inset -2px -2px #808080;"></div>
<div style="left:742px;top:61px;width:13px;height:13px;background:#fff;box-shadow:inset 1px 1px #808080,inset 2px 2px #404040,inset -1px -1px #fff,inset -2px -2px #D4D0C8;"></div>
<div class="t" style="left:761px;top:59.00px;line-height:17px;font-size:13px;font-weight:bold;color:#000;transform-origin:0 0;transform:scaleX(0.96);">Max</div>
<div style="left:899px;top:76px;width:125px;height:1px;background:#C0D0C0;"></div>
<div style="left:740px;top:77px;width:159px;height:18px;background:#D4D0C8;box-shadow:inset 1px 1px #fff,inset -1px -1px #000,inset -2px -2px #808080;"></div>
<div style="left:742px;top:79px;width:13px;height:13px;background:#fff;box-shadow:inset 1px 1px #808080,inset 2px 2px #404040,inset -1px -1px #fff,inset -2px -2px #D4D0C8;"></div>
<div class="t" style="left:761px;top:77.00px;line-height:17px;font-size:13px;font-weight:bold;color:#000;transform-origin:0 0;transform:scaleX(0.96);">Min</div>
<div style="left:899px;top:94px;width:125px;height:1px;background:#C0D0C0;"></div>
<div style="left:740px;top:95px;width:159px;height:18px;background:#D4D0C8;box-shadow:inset 1px 1px #fff,inset -1px -1px #000,inset -2px -2px #808080;"></div>
<div style="left:742px;top:97px;width:13px;height:13px;background:#fff;box-shadow:inset 1px 1px #808080,inset 2px 2px #404040,inset -1px -1px #fff,inset -2px -2px #D4D0C8;"></div>
<div class="t" style="left:761px;top:95.00px;line-height:17px;font-size:13px;font-weight:bold;color:#000;transform-origin:0 0;transform:scaleX(0.96);">Peak-to-Peak</div>
<div style="left:899px;top:112px;width:125px;height:1px;background:#C0D0C0;"></div>
<div style="left:740px;top:113px;width:159px;height:18px;background:#D4D0C8;box-shadow:inset 1px 1px #fff,inset -1px -1px #000,inset -2px -2px #808080;"></div>
<div style="left:742px;top:115px;width:13px;height:13px;background:#fff;box-shadow:inset 1px 1px #808080,inset 2px 2px #404040,inset -1px -1px #fff,inset -2px -2px #D4D0C8;"></div>
<svg style="left:742px;top:115px" width="13" height="13"><path d="M3 5.8 L5.5 8.6 L10 3.6" fill="none" stroke="#000" stroke-width="2.2"/></svg>
<div class="t" style="left:761px;top:113.00px;line-height:17px;font-size:13px;font-weight:bold;color:#008000;transform-origin:0 0;transform:scaleX(0.96);">High</div>
<div style="left:899px;top:130px;width:125px;height:1px;background:#C0D0C0;"></div>
<div class="t" style="left:901px;top:113.00px;line-height:17px;font-size:13px;font-weight:bold;color:#000;transform-origin:0 0;transform:scaleX(0.96);">4.64 V</div>
<div style="left:740px;top:131px;width:159px;height:18px;background:#D4D0C8;box-shadow:inset 1px 1px #fff,inset -1px -1px #000,inset -2px -2px #808080;"></div>
<div style="left:742px;top:133px;width:13px;height:13px;background:#fff;box-shadow:inset 1px 1px #808080,inset 2px 2px #404040,inset -1px -1px #fff,inset -2px -2px #D4D0C8;"></div>
<div class="t" style="left:761px;top:131.00px;line-height:17px;font-size:13px;font-weight:bold;color:#008000;transform-origin:0 0;transform:scaleX(0.96);">Low</div>
<div style="left:899px;top:148px;width:125px;height:1px;background:#C0D0C0;"></div>
<div style="left:740px;top:149px;width:159px;height:18px;background:#D4D0C8;box-shadow:inset 1px 1px #fff,inset -1px -1px #000,inset -2px -2px #808080;"></div>
<div style="left:742px;top:151px;width:13px;height:13px;background:#fff;box-shadow:inset 1px 1px #808080,inset 2px 2px #404040,inset -1px -1px #fff,inset -2px -2px #D4D0C8;"></div>
<div class="t" style="left:761px;top:149.00px;line-height:17px;font-size:13px;font-weight:bold;color:#008000;transform-origin:0 0;transform:scaleX(0.96);">Amplitude</div>
<div style="left:899px;top:166px;width:125px;height:1px;background:#C0D0C0;"></div>
<div style="left:740px;top:167px;width:159px;height:18px;background:#D4D0C8;box-shadow:inset 1px 1px #fff,inset -1px -1px #000,inset -2px -2px #808080;"></div>
<div style="left:742px;top:169px;width:13px;height:13px;background:#fff;box-shadow:inset 1px 1px #808080,inset 2px 2px #404040,inset -1px -1px #fff,inset -2px -2px #D4D0C8;"></div>
<svg style="left:742px;top:169px" width="13" height="13"><path d="M3 5.8 L5.5 8.6 L10 3.6" fill="none" stroke="#000" stroke-width="2.2"/></svg>
<div class="t" style="left:761px;top:167.00px;line-height:17px;font-size:13px;font-weight:bold;color:#000;transform-origin:0 0;transform:scaleX(0.96);">AC RMS</div>
<div style="left:899px;top:184px;width:125px;height:1px;background:#C0D0C0;"></div>
<div class="t" style="left:901px;top:167.00px;line-height:17px;font-size:13px;font-weight:bold;color:#000;transform-origin:0 0;transform:scaleX(0.96);">3.38 V</div>
<div style="left:740px;top:185px;width:159px;height:18px;background:#D4D0C8;box-shadow:inset 1px 1px #fff,inset -1px -1px #000,inset -2px -2px #808080;"></div>
<div style="left:742px;top:187px;width:13px;height:13px;background:#fff;box-shadow:inset 1px 1px #808080,inset 2px 2px #404040,inset -1px -1px #fff,inset -2px -2px #D4D0C8;"></div>
<div class="t" style="left:761px;top:185.00px;line-height:17px;font-size:13px;font-weight:bold;color:#000;transform-origin:0 0;transform:scaleX(0.96);">AC dBV</div>
<div style="left:899px;top:202px;width:125px;height:1px;background:#C0D0C0;"></div>
<div style="left:740px;top:203px;width:159px;height:18px;background:#D4D0C8;box-shadow:inset 1px 1px #fff,inset -1px -1px #000,inset -2px -2px #808080;"></div>
<div style="left:742px;top:205px;width:13px;height:13px;background:#fff;box-shadow:inset 1px 1px #808080,inset 2px 2px #404040,inset -1px -1px #fff,inset -2px -2px #D4D0C8;"></div>
<div class="t" style="left:761px;top:203.00px;line-height:17px;font-size:13px;font-weight:bold;color:#000;transform-origin:0 0;transform:scaleX(0.96);">AC dBm</div>
<div style="left:899px;top:220px;width:125px;height:1px;background:#C0D0C0;"></div>
<div style="left:740px;top:221px;width:159px;height:18px;background:#D4D0C8;box-shadow:inset 1px 1px #fff,inset -1px -1px #000,inset -2px -2px #808080;"></div>
<div style="left:742px;top:223px;width:13px;height:13px;background:#fff;box-shadow:inset 1px 1px #808080,inset 2px 2px #404040,inset -1px -1px #fff,inset -2px -2px #D4D0C8;"></div>
<svg style="left:742px;top:223px" width="13" height="13"><path d="M3 5.8 L5.5 8.6 L10 3.6" fill="none" stroke="#000" stroke-width="2.2"/></svg>
<div class="t" style="left:761px;top:221.00px;line-height:17px;font-size:13px;font-weight:bold;color:#000;transform-origin:0 0;transform:scaleX(0.96);">AC+DC RMS</div>
<div style="left:899px;top:238px;width:125px;height:1px;background:#C0D0C0;"></div>
<div class="t" style="left:901px;top:221.00px;line-height:17px;font-size:13px;font-weight:bold;color:#000;transform-origin:0 0;transform:scaleX(0.96);">3.38 V</div>
<div style="left:740px;top:239px;width:159px;height:18px;background:#D4D0C8;box-shadow:inset 1px 1px #fff,inset -1px -1px #000,inset -2px -2px #808080;"></div>
<div style="left:742px;top:241px;width:13px;height:13px;background:#fff;box-shadow:inset 1px 1px #808080,inset 2px 2px #404040,inset -1px -1px #fff,inset -2px -2px #D4D0C8;"></div>
<div class="t" style="left:761px;top:239.00px;line-height:17px;font-size:13px;font-weight:bold;color:#000;transform-origin:0 0;transform:scaleX(0.96);">AC+DC dBV</div>
<div style="left:899px;top:256px;width:125px;height:1px;background:#C0D0C0;"></div>
<div style="left:740px;top:257px;width:159px;height:18px;background:#D4D0C8;box-shadow:inset 1px 1px #fff,inset -1px -1px #000,inset -2px -2px #808080;"></div>
<div style="left:742px;top:259px;width:13px;height:13px;background:#fff;box-shadow:inset 1px 1px #808080,inset 2px 2px #404040,inset -1px -1px #fff,inset -2px -2px #D4D0C8;"></div>
<div class="t" style="left:761px;top:257.00px;line-height:17px;font-size:13px;font-weight:bold;color:#000;transform-origin:0 0;transform:scaleX(0.96);">AC+DC dBm</div>
<div style="left:899px;top:274px;width:125px;height:1px;background:#C0D0C0;"></div>
<div style="left:740px;top:275px;width:159px;height:18px;background:#D4D0C8;box-shadow:inset 1px 1px #fff,inset -1px -1px #000,inset -2px -2px #808080;"></div>
<div class="t" style="left:742px;top:275.00px;line-height:17px;font-size:13px;font-weight:bold;color:#000;transform-origin:0 0;transform:scaleX(0.86);">Timing:</div>
<div style="left:899px;top:292px;width:125px;height:1px;background:#C0D0C0;"></div>
<div style="left:740px;top:293px;width:159px;height:18px;background:#D4D0C8;box-shadow:inset 1px 1px #fff,inset -1px -1px #000,inset -2px -2px #808080;"></div>
<div style="left:742px;top:295px;width:13px;height:13px;background:#fff;box-shadow:inset 1px 1px #808080,inset 2px 2px #404040,inset -1px -1px #fff,inset -2px -2px #D4D0C8;"></div>
<div class="t" style="left:761px;top:293.00px;line-height:17px;font-size:13px;font-weight:bold;color:#000;transform-origin:0 0;transform:scaleX(0.96);">Duty Cycle</div>
<div style="left:899px;top:310px;width:125px;height:1px;background:#C0D0C0;"></div>
<div style="left:740px;top:311px;width:159px;height:18px;background:#D4D0C8;box-shadow:inset 1px 1px #fff,inset -1px -1px #000,inset -2px -2px #808080;"></div>
<div style="left:742px;top:313px;width:13px;height:13px;background:#fff;box-shadow:inset 1px 1px #808080,inset 2px 2px #404040,inset -1px -1px #fff,inset -2px -2px #D4D0C8;"></div>
<div class="t" style="left:761px;top:311.00px;line-height:17px;font-size:13px;font-weight:bold;color:#000;transform-origin:0 0;transform:scaleX(0.96);">Positive Width</div>
<div style="left:899px;top:328px;width:125px;height:1px;background:#C0D0C0;"></div>
<div style="left:740px;top:329px;width:159px;height:18px;background:#D4D0C8;box-shadow:inset 1px 1px #fff,inset -1px -1px #000,inset -2px -2px #808080;"></div>
<div style="left:742px;top:331px;width:13px;height:13px;background:#fff;box-shadow:inset 1px 1px #808080,inset 2px 2px #404040,inset -1px -1px #fff,inset -2px -2px #D4D0C8;"></div>
<div class="t" style="left:761px;top:329.00px;line-height:17px;font-size:13px;font-weight:bold;color:#000;transform-origin:0 0;transform:scaleX(0.96);">Negative Width</div>
<div style="left:899px;top:346px;width:125px;height:1px;background:#C0D0C0;"></div>
<div style="left:740px;top:347px;width:159px;height:18px;background:#D4D0C8;box-shadow:inset 1px 1px #fff,inset -1px -1px #000,inset -2px -2px #808080;"></div>
<div style="left:742px;top:349px;width:13px;height:13px;background:#fff;box-shadow:inset 1px 1px #808080,inset 2px 2px #404040,inset -1px -1px #fff,inset -2px -2px #D4D0C8;"></div>
<div class="t" style="left:761px;top:347.00px;line-height:17px;font-size:13px;font-weight:bold;color:#008000;transform-origin:0 0;transform:scaleX(0.96);">Rise Time</div>
<div style="left:899px;top:364px;width:125px;height:1px;background:#C0D0C0;"></div>
<div style="left:740px;top:365px;width:159px;height:18px;background:#D4D0C8;box-shadow:inset 1px 1px #fff,inset -1px -1px #000,inset -2px -2px #808080;"></div>
<div style="left:742px;top:367px;width:13px;height:13px;background:#fff;box-shadow:inset 1px 1px #808080,inset 2px 2px #404040,inset -1px -1px #fff,inset -2px -2px #D4D0C8;"></div>
<div class="t" style="left:761px;top:365.00px;line-height:17px;font-size:13px;font-weight:bold;color:#008000;transform-origin:0 0;transform:scaleX(0.96);">Fall Time</div>
<div style="left:899px;top:382px;width:125px;height:1px;background:#C0D0C0;"></div>
<div style="left:740px;top:383px;width:159px;height:18px;background:#D4D0C8;box-shadow:inset 1px 1px #fff,inset -1px -1px #000,inset -2px -2px #808080;"></div>
<div style="left:742px;top:385px;width:13px;height:13px;background:#fff;box-shadow:inset 1px 1px #808080,inset 2px 2px #404040,inset -1px -1px #fff,inset -2px -2px #D4D0C8;"></div>
<svg style="left:742px;top:385px" width="13" height="13"><path d="M3 5.8 L5.5 8.6 L10 3.6" fill="none" stroke="#000" stroke-width="2.2"/></svg>
<div class="t" style="left:761px;top:383.00px;line-height:17px;font-size:13px;font-weight:bold;color:#000;transform-origin:0 0;transform:scaleX(0.96);">Period</div>
<div style="left:899px;top:400px;width:125px;height:1px;background:#C0D0C0;"></div>
<div class="t" style="left:901px;top:383.00px;line-height:17px;font-size:13px;font-weight:bold;color:#000;transform-origin:0 0;transform:scaleX(0.96);">0.037 us</div>
<div style="left:740px;top:401px;width:159px;height:18px;background:#D4D0C8;box-shadow:inset 1px 1px #fff,inset -1px -1px #000,inset -2px -2px #808080;"></div>
<div style="left:742px;top:403px;width:13px;height:13px;background:#fff;box-shadow:inset 1px 1px #808080,inset 2px 2px #404040,inset -1px -1px #fff,inset -2px -2px #D4D0C8;"></div>
<svg style="left:742px;top:403px" width="13" height="13"><path d="M3 5.8 L5.5 8.6 L10 3.6" fill="none" stroke="#000" stroke-width="2.2"/></svg>
<div class="t" style="left:761px;top:401.00px;line-height:17px;font-size:13px;font-weight:bold;color:#000;transform-origin:0 0;transform:scaleX(0.96);">Frequency</div>
<div style="left:899px;top:418px;width:125px;height:1px;background:#C0D0C0;"></div>
<div class="t" style="left:901px;top:401.00px;line-height:17px;font-size:13px;font-weight:bold;color:#000;transform-origin:0 0;transform:scaleX(0.96);">27.1 MHz</div>
<div style="left:740px;top:419px;width:159px;height:18px;background:#D4D0C8;box-shadow:inset 1px 1px #fff,inset -1px -1px #000,inset -2px -2px #808080;"></div>
<div style="left:742px;top:421px;width:13px;height:13px;background:#fff;box-shadow:inset 1px 1px #808080,inset 2px 2px #404040,inset -1px -1px #fff,inset -2px -2px #D4D0C8;"></div>
<div class="t" style="left:761px;top:419.00px;line-height:17px;font-size:13px;font-weight:bold;color:#000;transform-origin:0 0;transform:scaleX(0.96);">Phase</div>
<div style="left:899px;top:436px;width:125px;height:1px;background:#C0D0C0;"></div>
<div style="left:995px;top:41px;width:1px;height:396px;background:#C0D0C0;"></div>
<div style="left:738px;top:437px;width:286px;height:35px;background:#D4D0C8;"></div>
<div style="left:738px;top:437px;width:286px;height:1px;background:#fff;"></div>
<div style="left:968px;top:444px;width:57px;height:20px;background:#D4D0C8;box-shadow:inset -1px -1px #404040,inset 1px 1px #fff,inset -2px -2px #808080;"></div>
<div class="t" style="left:796.5px;width:400px;text-align:center;top:444.00px;line-height:17px;font-size:13px;font-weight:normal;color:#000;transform-origin:50% 0;transform:scaleX(0.81);">Close</div>
</body></html>
